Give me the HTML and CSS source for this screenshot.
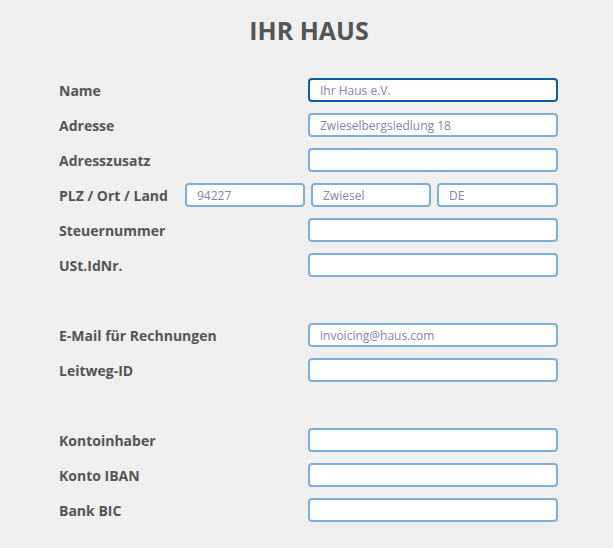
FILE: index.html
```html
<!DOCTYPE html>
<html lang="de">
<head>
    <meta charset="UTF-8">
    <meta name="viewport" content="width=device-width, initial-scale=1.0">
    <title>Ihr Haus</title>
    <link rel="stylesheet" href="styles.css">
</head>
<body>
    <h1>IHR HAUS</h1>
    <form class="house-form">
        <div class="row">
            <label for="name">Name</label>
            <input type="text" id="name" class="active" placeholder="Ihr Haus e.V.">
        </div>
        <div class="row">
            <label for="adresse">Adresse</label>
            <input type="text" id="adresse" placeholder="Zwieselbergsiedlung 18">
        </div>
        <div class="row">
            <label for="zusatz">Adresszusatz</label>
            <input type="text" id="zusatz">
        </div>
        <div class="row row-plz">
            <label for="plz">PLZ / Ort / Land</label>
            <div class="plz-inputs">
                <input type="text" id="plz" placeholder="94227">
                <input type="text" id="ort" placeholder="Zwiesel">
                <input type="text" id="land" placeholder="DE">
            </div>
        </div>
        <div class="row">
            <label for="steuer">Steuernummer</label>
            <input type="text" id="steuer">
        </div>
        <div class="row">
            <label for="ustid">USt.IdNr.</label>
            <input type="text" id="ustid">
        </div>

        <div class="spacer"></div>

        <div class="row">
            <label for="email">E-Mail für Rechnungen</label>
            <input type="text" id="email" placeholder="invoicing@haus.com">
        </div>
        <div class="row">
            <label for="leitweg">Leitweg-ID</label>
            <input type="text" id="leitweg">
        </div>

        <div class="spacer"></div>

        <div class="row">
            <label for="inhaber">Kontoinhaber</label>
            <input type="text" id="inhaber">
        </div>
        <div class="row">
            <label for="iban">Konto IBAN</label>
            <input type="text" id="iban">
        </div>
        <div class="row">
            <label for="bic">Bank BIC</label>
            <input type="text" id="bic">
        </div>
    </form>
</body>
</html>
```

FILE: styles.css
```css
body {
    font-family: "Open Sans", "Noto Sans", sans-serif;
    margin: 0;
    background-color: #f0f0f0;
    color: #555;
}
h1 {
    text-align: center;
    font-size: 25px;
    font-weight: bold;
    margin: 0;
    padding: 13px 0 0 5px;
    line-height: 34px;
    color: #555;
}
.house-form {
    width: 499px;
    margin: 31px 0 0 59px;
}
.row {
    display: grid;
    grid-template-columns: 249px 250px;
    align-items: center;
    height: 24px;
    margin-bottom: 11px;
}
.row label {
    font-size: 14px;
    font-weight: bold;
    color: #555;
}
.row-plz {
    grid-template-columns: 126px 373px;
}
.plz-inputs {
    display: flex;
    gap: 6px;
}
.plz-inputs input {
    width: 120px;
}
.plz-inputs input:last-child {
    width: 121px;
}
input {
    box-sizing: border-box;
    width: 250px;
    height: 24px;
    padding: 0 10px;
    border: 2px solid #7dafdb;
    border-radius: 4px;
    background-color: white;
    font-family: "Open Sans", "Noto Sans", sans-serif;
    font-size: 12px;
    color: #333;
    outline: none;
}
input::placeholder {
    color: #8683ad;
}
input.active {
    border-color: #0a5ca5;
}
.spacer {
    height: 35px;
}
```
